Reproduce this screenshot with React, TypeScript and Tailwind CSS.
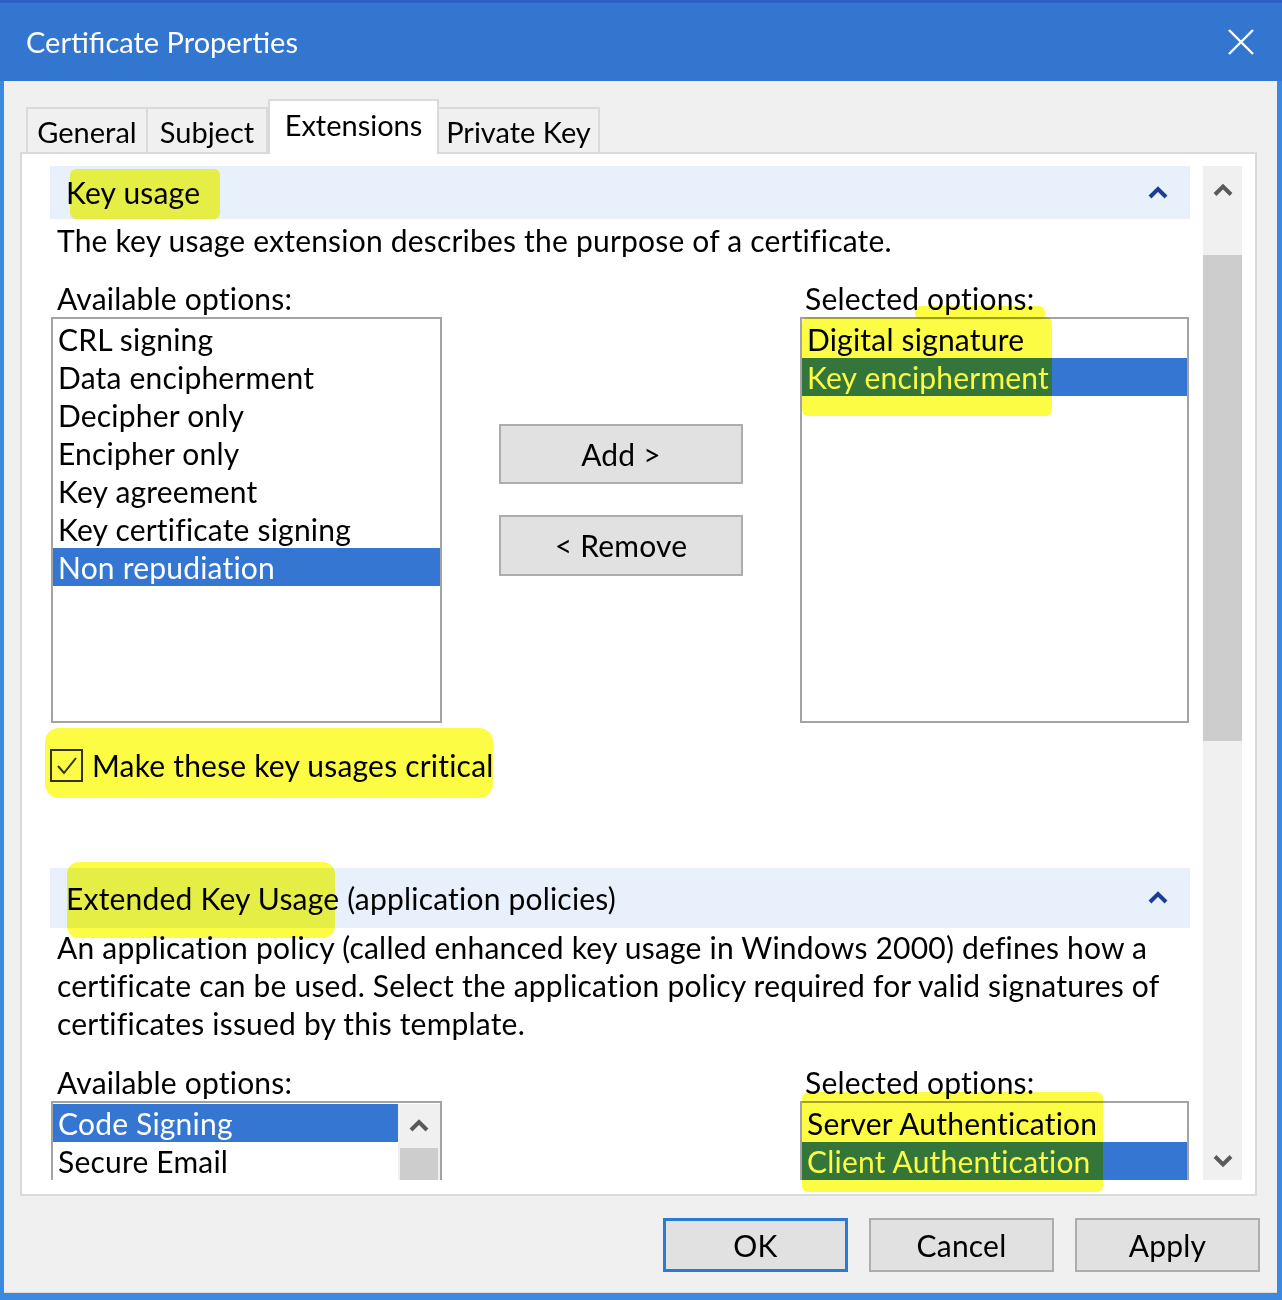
import React from 'react'

type Row = { label: string; selected?: boolean }

const keyAvailable: Row[] = [
  { label: 'CRL signing' },
  { label: 'Data encipherment' },
  { label: 'Decipher only' },
  { label: 'Encipher only' },
  { label: 'Key agreement' },
  { label: 'Key certificate signing' },
  { label: 'Non repudiation', selected: true },
]

const keySelected: Row[] = [
  { label: 'Digital signature' },
  { label: 'Key encipherment', selected: true },
]

const ekuSelected: Row[] = [
  { label: 'Server Authentication' },
  { label: 'Client Authentication', selected: true },
]

function Chevron({ down = false, color, className }: { down?: boolean; color: string; className: string }) {
  return (
    <svg viewBox="0 0 20 16" className={className} fill="none">
      <polyline
        points={down ? '2,4 10,12 18,4' : '2,12 10,4 18,12'}
        stroke={color}
        strokeWidth="4"
        strokeLinejoin="miter"
      />
    </svg>
  )
}

function ListRows({ rows }: { rows: Row[] }) {
  return (
    <>
      {rows.map((row) => (
        <div
          key={row.label}
          className={`h-[38px] leading-[38px] pl-[5px] whitespace-nowrap ${
            row.selected ? 'bg-[#3476d1] text-white' : ''
          }`}
        >
          {row.label}
        </div>
      ))}
    </>
  )
}

function SectionHeader({ children, height }: { children: React.ReactNode; height: string }) {
  return (
    <div className={`${height} bg-[#e8f1fb] flex items-center justify-between pl-[16px] pr-[22px]`}>
      <span className="whitespace-nowrap">{children}</span>
      <Chevron color="#1b3d96" className="w-[20px] h-[16px]" />
    </div>
  )
}

function Highlight({ className }: { className: string }) {
  return <div className={`absolute bg-[#fcfc45] mix-blend-multiply blur-[0.6px] rounded-[6px] ${className}`} />
}

function DialogButton({ children, focused = false }: { children: React.ReactNode; focused?: boolean }) {
  return (
    <button
      className={`w-[185px] h-[54px] bg-[#e1e1e1] flex items-center justify-center ${
        focused ? 'border-[3px] border-[#2b7ad6]' : 'border-2 border-[#adadad]'
      }`}
    >
      {children}
    </button>
  )
}

export default function App() {
  return (
    <div className="relative isolate w-[1282px] h-[1300px] overflow-hidden bg-[#3c89e2] font-['Lato',sans-serif] text-[30px] tracking-[0.2px] text-black">
      {/* Title bar */}
      <div className="h-[81px] bg-[#3376d0] border-t-[3px] border-[#2b5fc2] flex items-center justify-between pl-[26px] pr-[28px]">
        <span className="text-white text-[29px] tracking-normal">Certificate Properties</span>
        <svg viewBox="0 0 26 26" className="w-[26px] h-[26px]" fill="none">
          <path d="M1 1 L25 25 M25 1 L1 25" stroke="white" strokeWidth="2.4" />
        </svg>
      </div>

      {/* Body */}
      <div className="ml-[4px] mr-[5px] h-[1212px] bg-[#f0f0f0] border-b border-[#dcdcdc] flex flex-col">
        {/* Tabs */}
        <div className="mt-[18px] ml-[22px] flex items-end relative z-10 -mb-[2px] text-[29px] tracking-normal">
          <div className="w-[122px] h-[47px] border-2 border-b-0 border-[#dadada] flex items-center justify-center">
            General
          </div>
          <div className="w-[120px] h-[47px] border-2 border-l-0 border-b-0 border-[#dadada] flex items-center justify-center">
            Subject
          </div>
          <div className="w-[171px] h-[55px] bg-white border-2 border-b-0 border-[#dadada] flex items-center justify-center pb-[6px]">
            Extensions
          </div>
          <div className="w-[161px] h-[47px] border-2 border-l-0 border-b-0 border-[#dadada] flex items-center justify-center">
            Private Key
          </div>
        </div>

        {/* Tab panel */}
        <div className="ml-[16px] w-[1237px] h-[1044px] bg-white border-2 border-[#dadada] flex pt-[12px] pl-[28px] pr-[13px] pb-[14px]">
          {/* Scrolling content */}
          <div className="w-[1140px] h-[1014px] overflow-hidden">
            <SectionHeader height="h-[53px]">Key usage</SectionHeader>
            <div className="mt-[2px] h-[38px] leading-[38px] pl-[7px] whitespace-nowrap">
              The key usage extension describes the purpose of a certificate.
            </div>

            <div className="mt-[20px] flex items-start">
              <div className="ml-[1px] w-[391px]">
                <div className="h-[38px] leading-[38px] pl-[6px]">Available options:</div>
                <div className="h-[406px] border-2 border-[#a3a3a3] pt-[1px]">
                  <ListRows rows={keyAvailable} />
                </div>
              </div>
              <div className="ml-[57px] w-[244px] pt-[145px] flex flex-col gap-[31px]">
                <button className="h-[60px] bg-[#e1e1e1] border-2 border-[#adadad]">Add &gt;</button>
                <button className="h-[61px] bg-[#e1e1e1] border-2 border-[#adadad]">&lt; Remove</button>
              </div>
              <div className="ml-[57px] w-[389px]">
                <div className="h-[38px] leading-[38px] pl-[5px]">Selected options:</div>
                <div className="h-[406px] border-2 border-[#a3a3a3] pt-[1px]">
                  <ListRows rows={keySelected} />
                </div>
              </div>
            </div>

            {/* Critical checkbox */}
            <div className="mt-[26px] h-[33px] flex items-center gap-[9px]">
              <div className="w-[33px] h-[33px] border-2 border-[#333333] flex items-center justify-center">
                <svg viewBox="0 0 24 24" className="w-[24px] h-[24px]" fill="none">
                  <polyline points="3,12 9,19 21,4" stroke="#333333" strokeWidth="2" />
                </svg>
              </div>
              <span className="whitespace-nowrap">Make these key usages critical</span>
            </div>

            <div className="mt-[86px]">
              <SectionHeader height="h-[60px]">Extended Key Usage (application policies)</SectionHeader>
            </div>
            <div className="pl-[7px] whitespace-nowrap">
              <div className="h-[38px] leading-[38px]">
                An application policy (called enhanced key usage in Windows 2000) defines how a
              </div>
              <div className="h-[38px] leading-[38px]">
                certificate can be used. Select the application policy required for valid signatures of
              </div>
              <div className="h-[38px] leading-[38px]">certificates issued by this template.</div>
            </div>

            <div className="mt-[21px] flex items-start">
              <div className="ml-[1px] w-[391px]">
                <div className="h-[38px] leading-[38px] pl-[6px]">Available options:</div>
                <div className="h-[200px] border-2 border-[#a3a3a3] pt-[1px] flex">
                  <div className="flex-1">
                    <ListRows rows={[{ label: 'Code Signing', selected: true }, { label: 'Secure Email' }]} />
                  </div>
                  <div className="w-[42px] bg-[#f0f0f0] flex flex-col">
                    <div className="h-[44px] flex items-center justify-center">
                      <Chevron color="#5a5a5a" className="w-[20px] h-[16px]" />
                    </div>
                    <div className="flex-1 bg-[#cdcdcd] mx-[2px]" />
                  </div>
                </div>
              </div>
              <div className="ml-[57px] w-[244px]" />
              <div className="ml-[57px] w-[389px]">
                <div className="h-[38px] leading-[38px] pl-[5px]">Selected options:</div>
                <div className="h-[200px] border-2 border-[#a3a3a3] pt-[1px]">
                  <ListRows rows={ekuSelected} />
                </div>
              </div>
            </div>
          </div>

          {/* Vertical scrollbar */}
          <div className="ml-[13px] w-[39px] h-[1014px] bg-[#f0f0f0] flex flex-col">
            <div className="h-[48px] flex items-center justify-center">
              <Chevron color="#5a5a5a" className="w-[20px] h-[17px]" />
            </div>
            <div className="mt-[41px] h-[486px] bg-[#cdcdcd]" />
            <div className="flex-1" />
            <div className="h-[40px] flex items-center justify-center">
              <Chevron down color="#5a5a5a" className="w-[20px] h-[17px]" />
            </div>
          </div>
        </div>

        {/* Dialog buttons */}
        <div className="mt-[22px] pr-[17px] flex justify-end gap-[21px]">
          <DialogButton focused>OK</DialogButton>
          <DialogButton>Cancel</DialogButton>
          <DialogButton>Apply</DialogButton>
        </div>
      </div>

      {/* Highlighter marks drawn over the screenshot */}
      <Highlight className="left-[70px] top-[169px] w-[150px] h-[50px]" />
      <Highlight className="left-[802px] top-[317px] w-[250px] h-[99px]" />
      <Highlight className="left-[915px] top-[306px] w-[130px] h-[14px]" />
      <Highlight className="left-[45px] top-[728px] w-[448px] h-[70px] rounded-[14px]" />
      <Highlight className="left-[67px] top-[862px] w-[268px] h-[76px] rounded-[12px]" />
      <Highlight className="left-[802px] top-[1092px] w-[301px] h-[100px]" />
    </div>
  )
}
